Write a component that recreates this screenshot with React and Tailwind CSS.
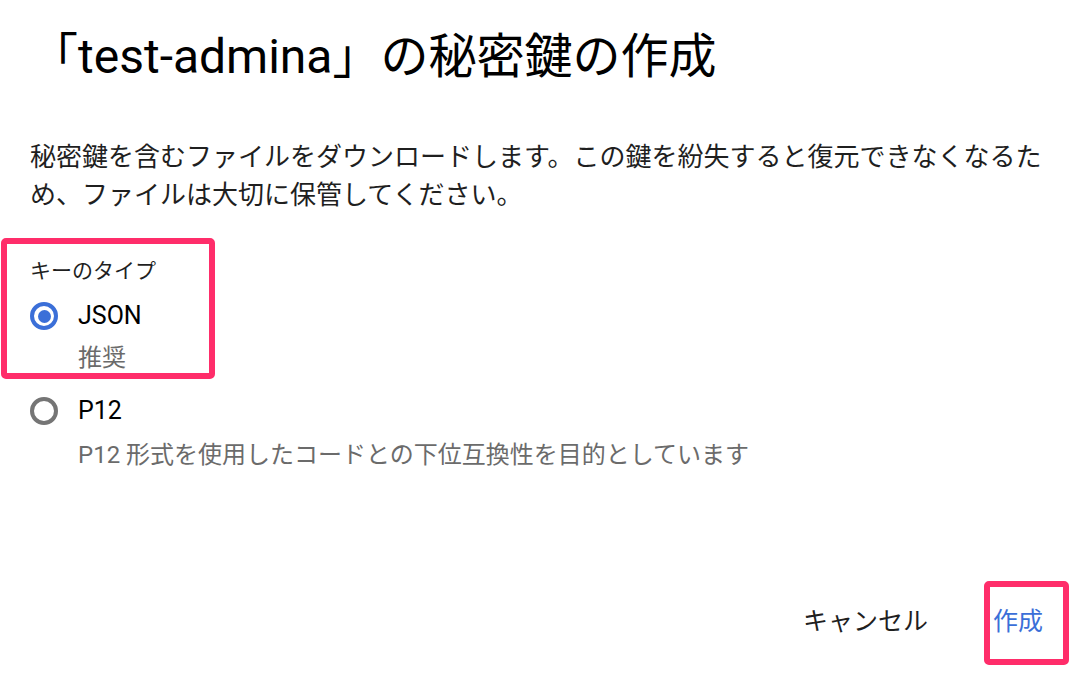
import React from "react";

const FONT = "font-['Roboto','Noto_Sans_CJK_JP',sans-serif]";

function Radio({ checked }) {
  return checked ? (
    <span className="w-[28px] h-[28px] rounded-full border-[4px] border-[#3b6fd8] flex items-center justify-center shrink-0">
      <span className="w-[13px] h-[13px] rounded-full bg-[#3b6fd8]" />
    </span>
  ) : (
    <span className="w-[28px] h-[28px] rounded-full border-[4px] border-[#757575] shrink-0" />
  );
}

export default function App() {
  return (
    <div className={`relative w-[1086px] h-[678px] bg-white flex flex-col overflow-hidden ${FONT}`}>
      <h1 className="pt-[25px] pl-[30px] text-[48px] leading-[64px] text-black font-normal whitespace-nowrap">
        「test-admina」の秘密鍵の作成
      </h1>

      <p className="mt-[49px] px-[30px] text-[26px] leading-[38px] text-[#1f1f1f]">
        秘密鍵を含むファイルをダウンロードします。この鍵を紛失すると復元できなくなるため、ファイルは大切に保管してください。
      </p>

      <section className="mt-[43px] pl-[30px] flex flex-col">
        <div className="text-[21px] leading-[28px] text-[#1f1f1f]">キーのタイプ</div>

        <label className="mt-[11px] h-[40px] flex items-center gap-[20px]">
          <Radio checked />
          <span className="text-[25px] text-black">JSON</span>
        </label>
        <div className="mt-[7px] pl-[48px] text-[24px] leading-[30px] text-[#6b6b6b]">推奨</div>

        <label className="mt-[18px] h-[40px] flex items-center gap-[20px]">
          <Radio />
          <span className="text-[25px] text-black">P12</span>
        </label>
        <div className="mt-[9px] pl-[48px] text-[24px] leading-[30px] text-[#6b6b6b]">
          P12 形式を使用したコードとの下位互換性を目的としています
        </div>
      </section>

      <footer className="mt-auto pb-[32px] pr-[27px] flex justify-end items-center gap-[33px]">
        <button className="h-[48px] px-4 text-[25px] text-[#1f1f1f]">キャンセル</button>
        <button className="h-[48px] px-4 text-[25px] text-[#3b6fd8]">作成</button>
      </footer>

      {/* highlight frames */}
      <div className="absolute left-[1px] top-[238px] w-[214px] h-[141px] border-[6px] border-[#ff2d6a] rounded-[5px] pointer-events-none" />
      <div className="absolute left-[984px] top-[581px] w-[85px] h-[84px] border-[6px] border-[#ff2d6a] rounded-[5px] pointer-events-none" />
    </div>
  );
}
